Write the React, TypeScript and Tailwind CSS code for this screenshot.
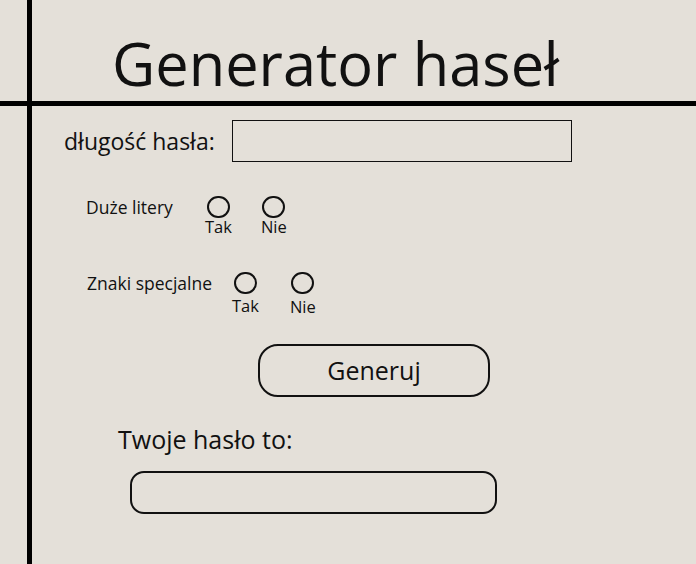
import React from 'react';

const Radio: React.FC<{ label: string; textClass?: string }> = ({ label, textClass = '' }) => (
  <div className="flex flex-col items-center">
    <span className="block w-[23px] h-[22px] rounded-full border-2 border-[#111]" />
    <span className={`text-[16.5px] leading-[18px] ${textClass}`}>{label}</span>
  </div>
);

export default function App() {
  return (
    <div
      className="w-[696px] h-[564px] bg-[#e4e0d9] text-[#111] grid grid-cols-[32px_1fr] grid-rows-[106px_1fr] overflow-hidden"
      style={{ fontFamily: '"Open Sans", "Noto Sans", sans-serif' }}
    >
      <div className="border-r-[5px] border-b-[5px] border-black" />
      <div className="border-b-[5px] border-black flex items-end">
        <h1 className="ml-[80px] mb-[-2px] text-[59.5px] leading-[80px] font-normal">Generator haseł</h1>
      </div>
      <div className="border-r-[5px] border-black" />

      {/* form */}
      <div className="flex flex-col">
        <div className="flex items-center mt-[14px] h-[42px] pl-[32px]">
          <label className="w-[168px] text-[23px] leading-[30px]">długość hasła:</label>
          <input type="text" className="w-[340px] h-[42px] border-[1.5px] border-[#111] bg-transparent outline-none" />
        </div>

        <div className="flex items-start mt-[34px] pl-[54px]">
          <span className="w-[119px] text-[17.5px] leading-[22px]">Duże litery</span>
          <div className="flex gap-[29px]">
            <Radio label="Tak" />
            <Radio label="Nie" />
          </div>
        </div>

        <div className="flex items-start mt-[36px] pl-[55px]">
          <span className="w-[145px] text-[17.5px] leading-[22px]">Znaki specjalne</span>
          <div className="flex gap-[31px]">
            <Radio label="Tak" textClass="mt-[3px]" />
            <Radio label="Nie" textClass="mt-[4px]" />
          </div>
        </div>

        <button className="ml-[226px] mt-[28px] w-[232px] h-[53px] rounded-[20px] border-2 border-[#111] text-[25px]">
          Generuj
        </button>

        <p className="ml-[86px] mt-[26px] text-[25px] leading-[32px]">Twoje hasło to:</p>

        <div className="ml-[98px] mt-[16px] w-[367px] h-[43px] rounded-[14px] border-2 border-[#111]" />
      </div>
    </div>
  );
}
